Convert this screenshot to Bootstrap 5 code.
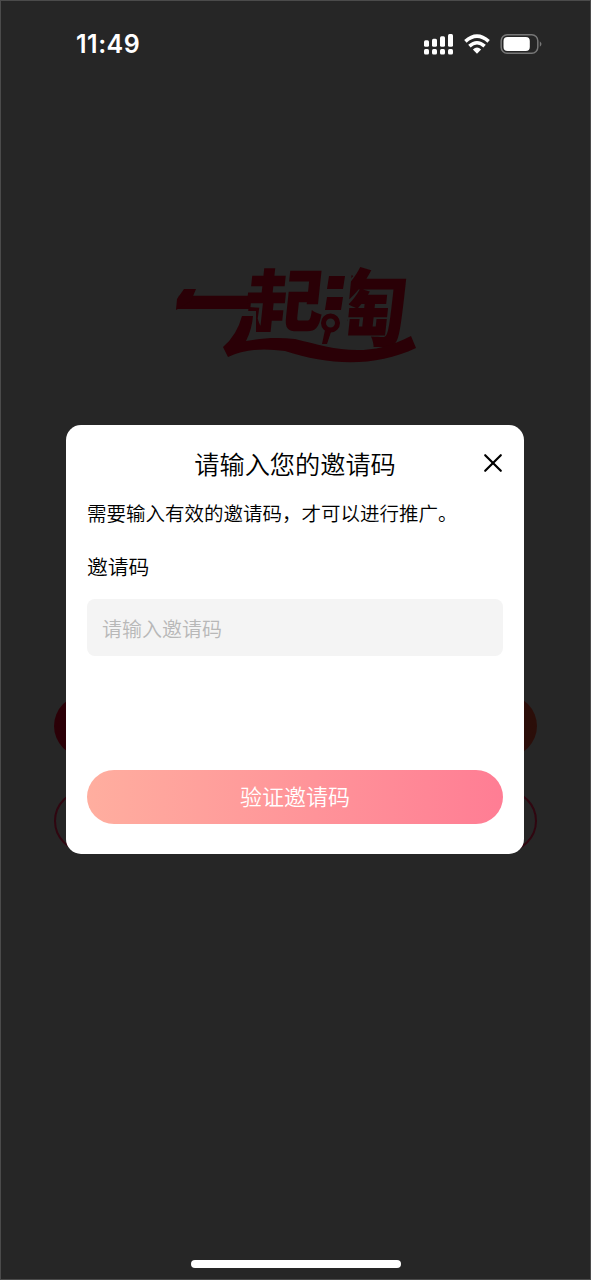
<!DOCTYPE html>
<html lang="zh-CN">
<head>
<meta charset="utf-8">
<meta name="viewport" content="width=device-width, initial-scale=1">
<title>一起淘</title>
<link href="https://cdn.jsdelivr.net/npm/bootstrap@5.3.0/dist/css/bootstrap.min.css" rel="stylesheet">
<style>
body{font-family:"Liberation Sans","Noto Sans CJK SC",sans-serif;background:#262626}
.phone{height:1280px;background:#262626;border:1px solid #4b4b4b;overflow:hidden}
.status{height:86px;padding:0 48px 0 75px}
.clock{font:600 25px/1 Inter,sans-serif;letter-spacing:.5px}
.brand{margin-top:130px;height:200px}
.brand text{font-family:"Noto Sans CJK SC",sans-serif;font-weight:900}
.entries{width:483px;margin-top:278px;gap:33px}
.entry{height:62px;border-radius:31px}
.entry-main{background:linear-gradient(90deg,#2b0007,#2b0e09)}
.entry-line{border:2px solid #300610}
.home-bar{width:210px;height:8px;margin-bottom:11px}
.dialog-layer{padding:0 1px 1px 0}
.dialog{width:458px;height:429px;border-radius:15px;padding:0 21px 30px;font-family:"Noto Sans CJK SC",sans-serif;font-weight:350;color:#000}
.dialog-head{height:77px}
.dialog-title{font-size:25.2px;font-weight:350;line-height:1}
.dismiss{right:0;top:28px;line-height:0}
.hint{font-size:19.5px;line-height:22px}
.field-label{font-size:20.8px;line-height:24px;margin-top:30px}
.code-input{height:57px;margin-top:21px;background:#f4f4f4!important;border-radius:8px;padding:2px 15px 0;font-size:20px;font-weight:350}
.code-input::placeholder{color:#b8b8b8;opacity:1}
.verify{height:54px;font-size:22px;font-weight:350;line-height:1;background:linear-gradient(90deg,#ffae9f,#ff7d94)}
</style>
</head>
<body>
<main class="phone position-relative d-flex flex-column align-items-center">
  <header class="status w-100 d-flex align-items-center justify-content-between text-white flex-shrink-0">
    <span class="clock">11:49</span>
    <svg width="120" height="24" viewBox="422 32 120 24" fill="#fff" aria-hidden="true">
      <rect x="424" y="40.2" width="5" height="6.5" rx="1.5"/><rect x="432" y="38.8" width="5" height="7.9" rx="1.5"/><rect x="440" y="36.2" width="5" height="10.5" rx="1.5"/><rect x="448" y="34" width="5" height="12.7" rx="1.5"/>
      <rect x="424" y="49" width="5" height="5.6" rx="1.5"/><rect x="432" y="49" width="5" height="5.6" rx="1.5"/><rect x="440" y="49" width="5" height="5.6" rx="1.5"/><rect x="448" y="49" width="5" height="5.6" rx="1.5"/>
      <g fill="none" stroke="#fff" stroke-width="3.6"><path d="M465.4 41.4Q477 31 488.6 41.4"/><path d="M469.4 46.1Q477 39.4 484.6 46.1"/></g>
      <path d="M472.9 49.6Q477 45.6 481.1 49.6L477 53.8Z"/>
      <rect x="501.2" y="34.8" width="36.6" height="18.5" rx="6" fill="none" stroke="#777" stroke-width="1.5"/>
      <rect x="503.5" y="37" width="26.3" height="14" rx="4"/><path d="M539.8 41.2Q543.2 44 539.8 46.8Z" fill="#777"/>
    </svg>
  </header>
  <svg class="brand flex-shrink-0" width="360" viewBox="116 216 360 200" fill="#2a0006" aria-label="一起淘">
    <defs>
      <clipPath id="right-part"><path d="M356 230H430V346H345L350 290Z"/></clipPath>
      <clipPath id="upper-part"><path d="M230 230H340V331H256V310H230Z"/></clipPath>
    </defs>
    <text transform="translate(172 334) skewX(-6) scale(.93 1)" font-size="84">一</text>
    <path d="M184 288H196L191 300 176 309 177 298Z"/>
    <g clip-path="url(#upper-part)"><text transform="translate(240 339) skewX(-6) scale(.93 .97)" font-size="87">起</text></g>
    <g clip-path="url(#right-part)"><text transform="translate(319 339) skewX(-6) scale(.98 .98)" font-size="87">淘</text></g>
    <path d="M329 275H345L343 288H327ZM327 296H343L341 309H325Z"/>
    <circle cx="330.5" cy="322" r="7" fill="none" stroke="#2a0006" stroke-width="5"/>
    <path d="M325 329L331 331 327 343H322Z"/>
    <path d="M242 315H253Q252 328 246 340C262 337 277 336 295 338C332 347 366 359 411 335L416 347C376 366 330 365 285 350Q250 345 228 356L223 346Q237 334 242 315Z"/>
  </svg>
  <div class="entries d-flex flex-column flex-shrink-0">
    <div class="entry entry-main"></div>
    <div class="entry entry-line"></div>
  </div>
  <div class="home-bar bg-white rounded-pill mt-auto flex-shrink-0"></div>

  <div class="dialog-layer position-absolute top-0 start-0 w-100 h-100 d-flex align-items-center justify-content-center">
    <section class="dialog bg-white d-flex flex-column" role="dialog" aria-modal="true">
      <div class="dialog-head position-relative d-flex align-items-center justify-content-center flex-shrink-0">
        <h1 class="dialog-title mb-0">请输入您的邀请码</h1>
        <button class="dismiss btn border-0 p-0 position-absolute" aria-label="关闭">
          <svg width="20" height="20" viewBox="0 0 20 20" fill="none" stroke="#000" stroke-width="2.2" stroke-linecap="round"><path d="M2.2 2.2 17.8 17.8M17.8 2.2 2.2 17.8"/></svg>
        </button>
      </div>
      <p class="hint mb-0 text-nowrap">需要输入有效的邀请码，才可以进行推广。</p>
      <label class="field-label" for="code">邀请码</label>
      <input id="code" class="code-input form-control border-0 flex-shrink-0" type="text" placeholder="请输入邀请码">
      <button class="verify btn border-0 rounded-pill text-white w-100 mt-auto p-0 pb-1">验证邀请码</button>
    </section>
  </div>
</main>
<script src="https://cdn.jsdelivr.net/npm/bootstrap@5.3.0/dist/js/bootstrap.bundle.min.js"></script>
</body>
</html>
